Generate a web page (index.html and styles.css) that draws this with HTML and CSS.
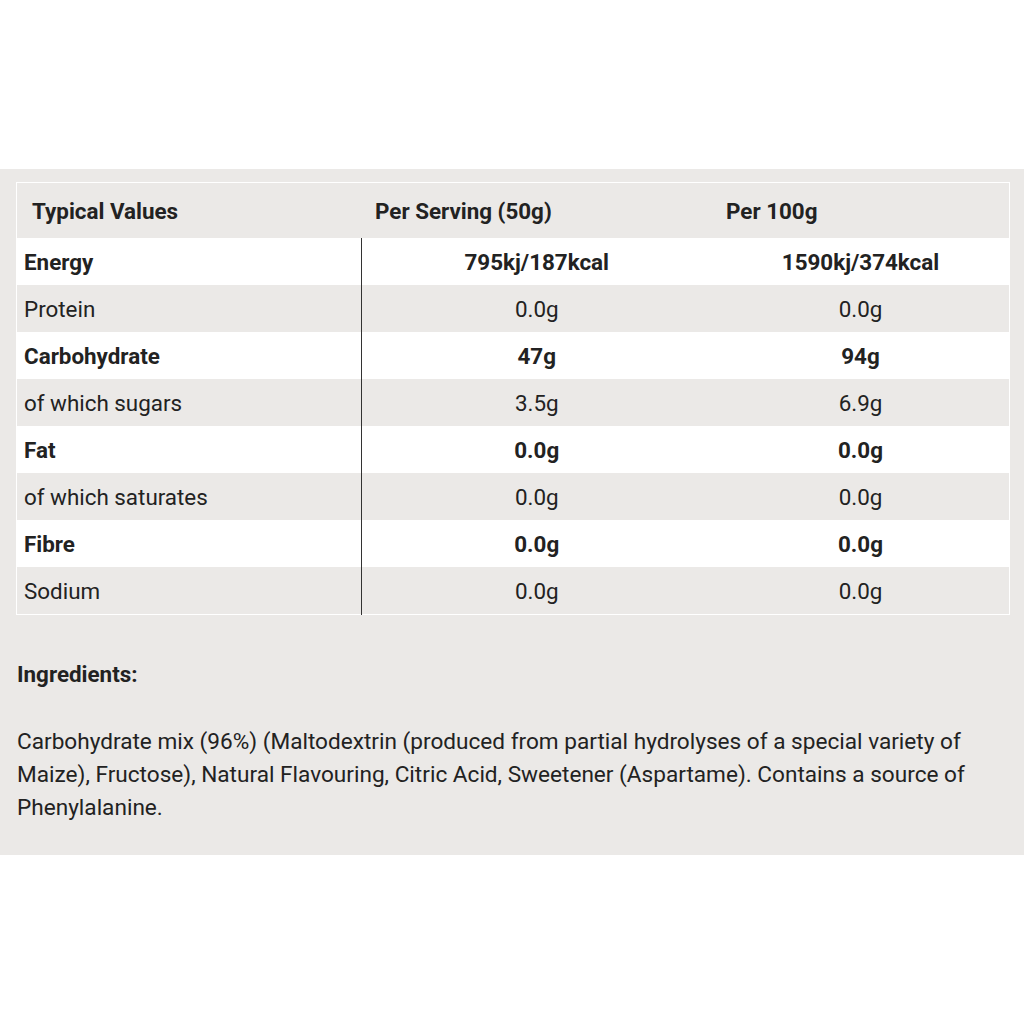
FILE: index.html
```html
<!DOCTYPE html>
<html lang="en">
<head>
    <meta charset="UTF-8">
    <title>Nutrition</title>
    <link rel="stylesheet" href="styles.css">
</head>
<body>
<div class="panel">
    <table class="nutrition">
        <thead>
        <tr>
            <th class="name">Typical Values</th>
            <th>Per Serving (50g)</th>
            <th>Per 100g</th>
        </tr>
        </thead>
        <tbody>
        <tr class="strong"><td>Energy</td><td>795kj/187kcal</td><td>1590kj/374kcal</td></tr>
        <tr><td>Protein</td><td>0.0g</td><td>0.0g</td></tr>
        <tr class="strong"><td>Carbohydrate</td><td>47g</td><td>94g</td></tr>
        <tr><td>of which sugars</td><td>3.5g</td><td>6.9g</td></tr>
        <tr class="strong"><td>Fat</td><td>0.0g</td><td>0.0g</td></tr>
        <tr><td>of which saturates</td><td>0.0g</td><td>0.0g</td></tr>
        <tr class="strong"><td>Fibre</td><td>0.0g</td><td>0.0g</td></tr>
        <tr><td>Sodium</td><td>0.0g</td><td>0.0g</td></tr>
        </tbody>
    </table>

    <h4 class="ingredients-title">Ingredients:</h4>
    <p class="ingredients">Carbohydrate mix (96%) (Maltodextrin (produced from partial hydrolyses of a special variety of Maize), Fructose), Natural Flavouring, Citric Acid, Sweetener (Aspartame). Contains a source of Phenylalanine.</p>
</div>
</body>
</html>
```

FILE: styles.css
```css
html, body {
    margin: 0;
    padding: 0;
    background: #fff;
    font-family: Roboto, "Liberation Sans", sans-serif;
    color: #222;
}

.panel {
    margin-top: 169px;
    background: #ebe9e7;
    padding: 13px 14px 31px 16px;
}

.nutrition {
    width: 994px;
    border-collapse: collapse;
    border: 1px solid #fff;
    font-size: 22.4px;
}

.nutrition th {
    height: 55px;
    padding: 0 0 0 14px;
    text-align: left;
    font-weight: 700;
    background: #ebe9e7;
}

.nutrition th.name {
    padding-left: 15px;
    width: 329px;
}

.nutrition th:nth-child(2) {
    width: 337px;
}

.nutrition td {
    height: 47px;
    padding: 0;
    text-align: center;
}

.nutrition td:first-child {
    text-align: left;
    padding-left: 7px;
    border-right: 1px solid #333;
}

.nutrition tbody tr {
    background: #ebe9e7;
}

.nutrition tbody tr.strong {
    background: #fff;
    font-weight: 700;
}

.ingredients-title {
    margin: 44px 0 0 1px;
    font-size: 22.4px;
    font-weight: 700;
    line-height: 30px;
}

.ingredients {
    margin: 36px 0 0 1px;
    font-size: 22.6px;
    line-height: 33px;
}
```
